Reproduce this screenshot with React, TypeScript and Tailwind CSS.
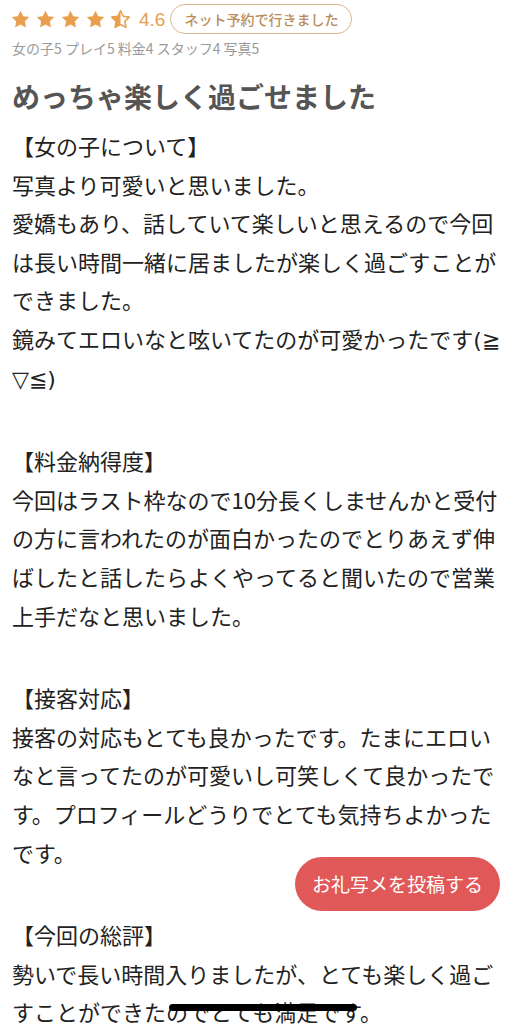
import React from "react";

const STAR =
  "M12 2l3.09 6.26L22 9.27l-5 4.87 1.18 6.88L12 17.77l-6.18 3.25L7 14.14 2 9.27l6.91-1.01L12 2z";

function Star({ half = false }: { half?: boolean }) {
  return (
    <svg width="21" height="21" viewBox="0 0 24 24" className="shrink-0">
      <defs>
        <clipPath id="halfclip">
          <rect x="0" y="0" width="12" height="24" />
        </clipPath>
      </defs>
      {half ? (
        <>
          <path d={STAR} fill="none" stroke="#e8a04e" strokeWidth="1.8" strokeLinejoin="round" />
          <path d={STAR} fill="#e8a04e" clipPath="url(#halfclip)" />
        </>
      ) : (
        <path d={STAR} fill="#e8a04e" />
      )}
    </svg>
  );
}

const sym = { fontFamily: '"DejaVu Sans", sans-serif' } as const;

const sections: { title: string; lines: React.ReactNode[]; gap: string }[] = [
  {
    title: "【女の子について】",
    gap: "",
    lines: [
      "写真より可愛いと思いました。",
      "愛嬌もあり、話していて楽しいと思えるので今回",
      "は長い時間一緒に居ましたが楽しく過ごすことが",
      "できました。",
      <>
        鏡みてエロいなと呟いてたのが可愛かったです<span style={sym}>(≧</span>
      </>,
      <span style={sym}>▽≦)</span>,
    ],
  },
  {
    title: "【料金納得度】",
    gap: "mt-[45px]",
    lines: [
      "今回はラスト枠なので10分長くしませんかと受付",
      "の方に言われたのが面白かったのでとりあえず伸",
      "ばしたと話したらよくやってると聞いたので営業",
      "上手だなと思いました。",
    ],
  },
  {
    title: "【接客対応】",
    gap: "mt-[44px]",
    lines: [
      "接客の対応もとても良かったです。たまにエロい",
      "なと言ってたのが可愛いし可笑しくて良かったで",
      "す。プロフィールどうりでとても気持ちよかった",
      "です。",
    ],
  },
  {
    title: "【今回の総評】",
    gap: "mt-[44px]",
    lines: [
      "勢いで長い時間入りましたが、とても楽しく過ご",
      "すことができたのでとても満足です。",
    ],
  },
];

export default function App() {
  return (
    <div
      className="relative w-[528px] h-[1024px] overflow-hidden bg-white"
      style={{ fontFamily: '"Noto Sans CJK JP", "Noto Sans", sans-serif' }}
    >
      <div className="flex items-center h-[36px] pl-[10px] pt-[2px]">
        <div className="flex items-center gap-[4px]">
          <Star />
          <Star />
          <Star />
          <Star />
          <Star half />
        </div>
        <span
          className="ml-[8px] text-[19px] font-medium text-[#e6a050] leading-none"
          style={{ fontFamily: '"Liberation Sans", sans-serif' }}
        >
          4.6
        </span>
        <span className="ml-[5px] h-[30px] flex items-center px-[13px] rounded-full border-[1.5px] border-[#dcb68e] text-[14px] font-medium text-[#b98d5c] leading-none">
          ネット予約で行きました
        </span>
      </div>
      <div className="mt-[2px] pl-[12px] text-[14px] leading-[20px] text-[#9a9a9a]">
        女の子5 プレイ5 料金4 スタッフ4 写真5
      </div>
      <h1 className="mt-[18px] pl-[12px] text-[28px] leading-[40px] font-bold text-[#555555]">
        めっちゃ楽しく過ごせました
      </h1>
      <div className="mt-[10px] pl-[12px] text-[22px] leading-[38.6px] text-[#222222] whitespace-nowrap">
        {sections.map((s, i) => (
          <div key={i} className={s.gap}>
            <div className="h-[38.6px]">{s.title}</div>
            {s.lines.map((l, j) => (
              <div key={j} className="h-[38.6px]">
                {l}
              </div>
            ))}
          </div>
        ))}
      </div>

      <button className="absolute left-[295px] top-[857px] w-[205px] h-[54px] rounded-full bg-[#e05858] text-white text-[19px] flex items-center justify-center">
        お礼写メを投稿する
      </button>
      <div className="absolute left-[169px] top-[1004px] w-[188px] h-[7px] rounded-full bg-black" />
    </div>
  );
}
